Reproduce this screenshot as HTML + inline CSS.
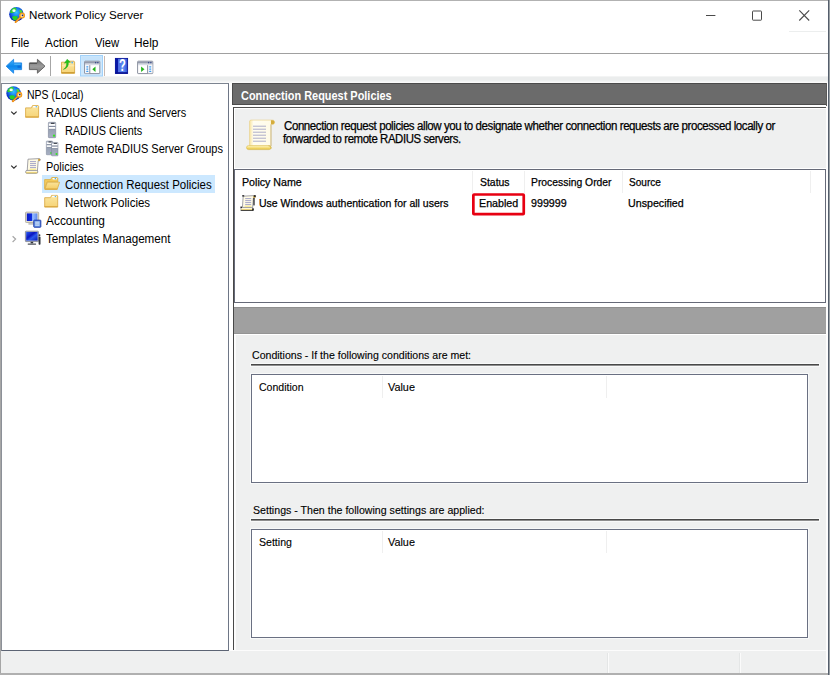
<!DOCTYPE html>
<html lang="en"><head><meta charset="utf-8"><title>Network Policy Server</title>
<style>
html,body{margin:0;padding:0;background:#fff;}
body{width:830px;height:675px;overflow:hidden;font-family:"Liberation Sans",sans-serif;}
#win{position:relative;width:830px;height:675px;overflow:hidden;background:#fff;}
#win div,#win span,#win svg{position:absolute;box-sizing:border-box;}
.t{white-space:nowrap;transform-origin:0 0;line-height:16px;height:16px;color:#000;}
#win .g{left:0;top:0;width:0;height:0;}
</style></head>
<body>
<div id="win">
<div class="g" id="frame" aria-label="Window frame">
<div style="left:0;top:0;width:830px;height:1px;background:#b2b2b2"></div>
<div style="left:0;top:0;width:1px;height:675px;background:#a6a6a6"></div>
<div style="left:0;top:673px;width:830px;height:2px;background:#b0b0b0"></div>
<div style="left:828px;top:0;width:1px;height:675px;background:#545e6c"></div>
<div style="left:829px;top:0;width:1px;height:675px;background:#9aa0a4"></div>
</div>
<div class="g" id="titlebar" aria-label="Title bar">
<span class="t" style="left:28.91px;top:7.00px;font-size:11.7px;transform:scaleX(0.9947);">Network Policy Server</span>
</div>
<div class="g" id="menubar" aria-label="Menu bar">
<span class="t" style="left:11.06px;top:35.00px;font-size:12px;transform:scaleX(0.9444);">File</span>
<span class="t" style="left:45.30px;top:35.00px;font-size:12px;transform:scaleX(0.9848);">Action</span>
<span class="t" style="left:94.50px;top:35.00px;font-size:12px;transform:scaleX(0.9385);">View</span>
<span class="t" style="left:134.01px;top:35.00px;font-size:12px;transform:scaleX(0.9913);">Help</span>
<div style="left:1px;top:53px;width:827px;height:1px;background:#a0a0a0"></div>
</div>
<div class="g" id="toolbar" aria-label="Toolbar">
<div style="left:1px;top:76px;width:827px;height:7px;background:linear-gradient(to bottom,#f3f4f4 0,#f3f4f4 1px,#ebeded 1px,#ebeded 4px,#eef0f0 4px,#eef0f0 5px,#f4f5f5 5px,#f4f5f5 6px,#fafafa 6px)"></div>
</div>
<div class="g" id="statusbar" aria-label="Status bar">
<div style="left:1px;top:651px;width:827px;height:22px;background:#eff0f0"></div>
<div style="left:608px;top:653px;width:1px;height:20px;background:#fbfbfb"></div>
<div style="left:740px;top:653px;width:1px;height:20px;background:#fbfbfb"></div>
<div style="left:826px;top:653px;width:1px;height:20px;background:#fbfbfb"></div>
<div style="left:1px;top:650px;width:827px;height:1px;background:#fcfcfc"></div>
<div style="left:607px;top:653px;width:1px;height:20px;background:#e4e6e6"></div>
<div style="left:739px;top:653px;width:1px;height:20px;background:#e4e6e6"></div>
</div>
<div class="g" id="tree" aria-label="Console tree">
<div style="left:1px;top:83px;width:228px;height:568px;background:#fff;border:1px solid #6e7686;border-top-color:#7c8490;border-left-color:#8c9098;border-bottom-color:#5c6474"></div>
<div style="left:42px;top:175px;width:173px;height:18px;background:#cce8ff"></div>
<span class="t" style="left:27.43px;top:87.00px;font-size:12px;transform:scaleX(0.8746);">NPS (Local)</span>
<span class="t" style="left:46.09px;top:105.00px;font-size:12px;transform:scaleX(0.9138);">RADIUS Clients and Servers</span>
<span class="t" style="left:65.10px;top:123.00px;font-size:12px;transform:scaleX(0.9048);">RADIUS Clients</span>
<span class="t" style="left:65.08px;top:141.00px;font-size:12px;transform:scaleX(0.9181);">Remote RADIUS Server Groups</span>
<span class="t" style="left:46.09px;top:159.00px;font-size:12px;transform:scaleX(0.9100);">Policies</span>
<span class="t" style="left:65.14px;top:177.00px;font-size:12px;transform:scaleX(0.9559);">Connection Request Policies</span>
<span class="t" style="left:65.04px;top:195.00px;font-size:12px;transform:scaleX(0.9598);">Network Policies</span>
<span class="t" style="left:45.80px;top:213.00px;font-size:12px;transform:scaleX(0.9915);">Accounting</span>
<span class="t" style="left:45.80px;top:231.00px;font-size:12px;transform:scaleX(0.9727);">Templates Management</span>
</div>
<div class="g" id="details" aria-label="Details pane">
<div style="left:233px;top:83px;width:594px;height:567px;background:#eff0f0"></div>
<div style="left:232px;top:83px;width:595px;height:22px;background:#6b6b6b;border:1px solid #4c4c4c"></div>
<div style="left:233px;top:105px;width:594px;height:2px;background:#fff"></div>
<div style="left:233px;top:107px;width:594px;height:543px;border-top:1px solid #505050;border-left:1px solid #484848"></div>
<div style="left:234px;top:108px;width:593px;height:60px;border-top:1px solid #fff;border-left:1px solid #fff"></div>
<div style="left:234px;top:168px;width:593px;height:1px;background:#fff"></div>
<span class="t" style="left:241.06px;top:88.00px;font-size:13px;transform:scaleX(0.8410);font-weight:700;color:#fff;">Connection Request Policies</span>
<span class="t" style="left:284.30px;top:118.00px;font-size:12.5px;transform:scaleX(0.9208);letter-spacing:-0.45px;-webkit-text-stroke:0.25px currentColor;">Connection request policies allow you to designate whether connection requests are processed locally or</span>
<span class="t" style="left:283.40px;top:131.00px;font-size:12.5px;transform:scaleX(0.9129);letter-spacing:-0.45px;-webkit-text-stroke:0.25px currentColor;">forwarded to remote RADIUS servers.</span>
<div class="g" id="policy-list" aria-label="Policy list">
<div style="left:234px;top:169px;width:592px;height:134px;background:#fff;border:1px solid #666a78"></div>
<div style="left:472px;top:171px;width:1px;height:22px;background:#efefef"></div>
<div style="left:524px;top:171px;width:1px;height:22px;background:#efefef"></div>
<div style="left:622px;top:171px;width:1px;height:22px;background:#efefef"></div>
<div style="left:810px;top:171px;width:1px;height:22px;background:#efefef"></div>
<div style="left:234px;top:303px;width:593px;height:4px;background:#fff"></div>
<div style="left:234px;top:307px;width:593px;height:27px;background:#a0a0a0;border-top:1px solid #8e8e8e;border-bottom:1px solid #949494"></div>
<div style="left:234px;top:334px;width:593px;height:1px;background:#fff"></div>
<div style="left:234px;top:335px;width:2px;height:315px;background:#fbfbfb"></div>
<div style="left:826px;top:83px;width:2px;height:590px;background:#fdfdfd"></div>
<div style="left:826px;top:83px;width:1px;height:23px;background:#5a5a5a"></div>
<span class="t" style="left:241.73px;top:174.00px;font-size:11px;transform:scaleX(0.9683);-webkit-text-stroke:0.25px currentColor;">Policy Name</span>
<span class="t" style="left:479.80px;top:174.00px;font-size:11px;transform:scaleX(0.9484);-webkit-text-stroke:0.25px currentColor;">Status</span>
<span class="t" style="left:530.66px;top:174.00px;font-size:11px;transform:scaleX(0.9412);-webkit-text-stroke:0.25px currentColor;">Processing Order</span>
<span class="t" style="left:628.90px;top:174.00px;font-size:11px;transform:scaleX(0.9143);-webkit-text-stroke:0.25px currentColor;">Source</span>
<span class="t" style="left:258.55px;top:195.00px;font-size:11px;transform:scaleX(0.9535);-webkit-text-stroke:0.25px currentColor;">Use Windows authentication for all users</span>
<span class="t" style="left:478.83px;top:195.00px;font-size:11px;transform:scaleX(0.9718);-webkit-text-stroke:0.25px currentColor;">Enabled</span>
<span class="t" style="left:531.20px;top:195.00px;font-size:11px;transform:scaleX(0.9722);-webkit-text-stroke:0.25px currentColor;">999999</span>
<span class="t" style="left:627.93px;top:195.00px;font-size:11px;transform:scaleX(0.9696);-webkit-text-stroke:0.25px currentColor;">Unspecified</span>
</div>
<div class="g" id="conditions" aria-label="Conditions">
<div style="left:251px;top:364px;width:568px;height:2px;background:linear-gradient(to bottom,#484848 0,#484848 1px,#8e8e8e 1px);box-shadow:0 0 0 1px #f8f9f9"></div>
<div style="left:251px;top:374px;width:557px;height:109px;background:#fff;border:1px solid #6a7082;box-shadow:0 0 0 1px #f8f9f9"></div>
<div style="left:382px;top:376px;width:1px;height:22px;background:#efefef"></div>
<div style="left:606px;top:376px;width:1px;height:22px;background:#efefef"></div>
<span class="t" style="left:252.38px;top:347.00px;font-size:11.5px;transform:scaleX(0.9186);-webkit-text-stroke:0.12px currentColor;">Conditions - If the following conditions are met:</span>
<span class="t" style="left:259.44px;top:379.00px;font-size:11px;transform:scaleX(0.9578);-webkit-text-stroke:0.12px currentColor;">Condition</span>
<span class="t" style="left:388.00px;top:379.00px;font-size:11px;transform:scaleX(0.9852);-webkit-text-stroke:0.12px currentColor;">Value</span>
</div>
<div class="g" id="settings" aria-label="Settings">
<div style="left:251px;top:519px;width:568px;height:2px;background:linear-gradient(to bottom,#484848 0,#484848 1px,#8e8e8e 1px);box-shadow:0 0 0 1px #f8f9f9"></div>
<div style="left:251px;top:529px;width:557px;height:109px;background:#fff;border:1px solid #6a7082;box-shadow:0 0 0 1px #f8f9f9"></div>
<div style="left:382px;top:531px;width:1px;height:22px;background:#efefef"></div>
<div style="left:606px;top:531px;width:1px;height:22px;background:#efefef"></div>
<span class="t" style="left:253.08px;top:502.00px;font-size:11.5px;transform:scaleX(0.9225);-webkit-text-stroke:0.12px currentColor;">Settings - Then the following settings are applied:</span>
<span class="t" style="left:259.44px;top:534.00px;font-size:11px;transform:scaleX(0.9606);-webkit-text-stroke:0.12px currentColor;">Setting</span>
<span class="t" style="left:388.00px;top:534.00px;font-size:11px;transform:scaleX(0.9852);-webkit-text-stroke:0.12px currentColor;">Value</span>
</div>
</div>
<svg width="830" height="675" viewBox="0 0 830 675" style="left:0;top:0">
<defs>
  <radialGradient id="gGlobe" cx="0.5" cy="0.38" r="0.62">
    <stop offset="0" stop-color="#35c4ff"/><stop offset="0.45" stop-color="#1a7cf0"/><stop offset="1" stop-color="#0414b4"/>
  </radialGradient>
  <linearGradient id="gArrL" x1="0" y1="0" x2="0" y2="1">
    <stop offset="0" stop-color="#3fb2ff"/><stop offset="0.5" stop-color="#0d86ea"/><stop offset="1" stop-color="#2da2ff"/>
  </linearGradient>
  <linearGradient id="gArrR" x1="0" y1="0" x2="0" y2="1">
    <stop offset="0" stop-color="#6e6e6e"/><stop offset="0.5" stop-color="#9c9c9c"/><stop offset="1" stop-color="#7c7c7c"/>
  </linearGradient>
  <linearGradient id="gFold" x1="0" y1="0" x2="0" y2="1">
    <stop offset="0" stop-color="#fbe6a2"/><stop offset="1" stop-color="#f6d477"/>
  </linearGradient>
  <linearGradient id="gFoldO" x1="0" y1="0" x2="0" y2="1">
    <stop offset="0" stop-color="#fbe39a"/><stop offset="1" stop-color="#f3cc62"/>
  </linearGradient>
  <linearGradient id="gHelp" x1="0" y1="0" x2="1" y2="0">
    <stop offset="0" stop-color="#0a1aa8"/><stop offset="0.25" stop-color="#4f6fe4"/><stop offset="0.7" stop-color="#5b8af2"/><stop offset="1" stop-color="#2a48d0"/>
  </linearGradient>
  <linearGradient id="gSrv" x1="0" y1="0" x2="0" y2="1">
    <stop offset="0" stop-color="#c4cad6"/><stop offset="0.5" stop-color="#98a2b4"/><stop offset="1" stop-color="#a8b0c4"/>
  </linearGradient>
  <linearGradient id="gScr" x1="0" y1="0" x2="1" y2="0">
    <stop offset="0" stop-color="#f9e6a4"/><stop offset="0.16" stop-color="#fffdf2"/><stop offset="0.8" stop-color="#fffbe8"/><stop offset="1" stop-color="#f2dc98"/>
  </linearGradient>
  <linearGradient id="gRoll" x1="0" y1="0" x2="0" y2="1">
    <stop offset="0" stop-color="#fff6c8"/><stop offset="0.6" stop-color="#f4da6c"/><stop offset="1" stop-color="#dcb840"/>
  </linearGradient>
  <linearGradient id="gMon" x1="0" y1="0" x2="1" y2="0">
    <stop offset="0" stop-color="#0a18c8"/><stop offset="0.45" stop-color="#1030e0"/><stop offset="0.55" stop-color="#9cc0ff"/><stop offset="1" stop-color="#5a86f0"/>
  </linearGradient>
  <linearGradient id="gMon2" x1="0" y1="0" x2="1" y2="1">
    <stop offset="0" stop-color="#2a5cf0"/><stop offset="0.4" stop-color="#0a14c0"/><stop offset="0.6" stop-color="#2a58ec"/><stop offset="1" stop-color="#0818b8"/>
  </linearGradient>

  <g id="globe">
    <circle cx="7.4" cy="7.2" r="7.25" fill="url(#gGlobe)"/>
    <path d="M1 5.4 C1.4 3 3.4 1 6 0.6 C7.4 0.9 7.8 2.4 7 3.8 C6 5.4 4.2 6 2.6 6 C1.8 6 1.2 5.8 1 5.4Z" fill="#2fd22c"/>
    <ellipse cx="5" cy="3.7" rx="1.7" ry="1.35" fill="#fff" opacity="0.95"/>
    <path d="M10.4 3 C11.6 2.2 13.2 3.4 13.5 5.2 C12.8 6 11.2 6 10.5 5 Z" fill="#4fdc2e"/>
    <path d="M3 10.2 C4.2 8.6 7.4 8.6 8.8 9.8 C9 11.6 7.6 13.2 5.8 13.6 C4.2 13 3.2 11.6 3 10.2Z" fill="#25d02a"/>
    <path d="M11.6 10.2 L6.6 15" stroke="#ec8206" stroke-width="1.9" stroke-linecap="round" fill="none"/>
    <path d="M11.4 10.4 L6.9 14.7" stroke="#ffc23c" stroke-width="0.7" stroke-linecap="round" fill="none"/>
    <circle cx="13.1" cy="8.5" r="2.25" fill="#fff0b8" stroke="#ee8808" stroke-width="1.4"/>
    <circle cx="13.1" cy="8.5" r="2.1" fill="none" stroke="#ffcc4c" stroke-width="0.5"/>
    <circle cx="13.5" cy="8.3" r="0.85" fill="#141c8c"/>
  </g>

  <g id="folder">
    <path d="M0.5 2.9 L6.3 2.9 L7.4 0.6 L13.1 0.6 L13.5 1.2 L13.5 12.3 L0.5 12.3 Z" fill="url(#gFold)" stroke="#dcae4c" stroke-width="0.9"/>
    <rect x="7.8" y="1" width="4.8" height="1.4" rx="0.7" fill="#fff"/>
    <circle cx="11.2" cy="1.7" r="0.8" fill="#58b4f4"/>
    <rect x="0.5" y="11.4" width="13" height="0.9" fill="#d9a53c"/>
  </g>

  <g id="server">
    <rect x="0.3" y="0.3" width="7.3" height="15.4" rx="0.7" fill="url(#gSrv)" stroke="#788296" stroke-width="0.6"/>
    <rect x="0.8" y="1.8" width="6.3" height="2.1" fill="#fff"/>
    <rect x="0.8" y="4.9" width="6.3" height="2" fill="#fff"/>
    <rect x="0.8" y="3.9" width="6.3" height="1" fill="#7e8698"/>
    <rect x="0.8" y="6.9" width="6.3" height="0.9" fill="#8a92a4"/>
    <rect x="2.8" y="0.8" width="3.6" height="1" fill="#22262e"/>
    <circle cx="5.9" cy="13.7" r="1.15" fill="#34e420"/>
  </g>

  <g id="scroll16">
    <path d="M3 1.2 L14.2 0.6 C15.6 0.6 15.8 2.6 14.4 2.8 L13.2 2.8 L12.4 13 L2.2 13 Z" fill="#fffbe6" stroke="#8c8c94" stroke-width="0.8"/>
    <path d="M13.2 0.9 C15.4 0.4 16 2.6 14.2 3 L13.2 2.8Z" fill="#c89a34"/>
    <rect x="0.6" y="12.4" width="12.2" height="3" rx="1.5" fill="#fff8d8" stroke="#8c8c94" stroke-width="0.8"/>
    <rect x="0.9" y="14.3" width="11.4" height="1" rx="0.5" fill="#e4c860"/>
    <g stroke="#9a9ac4" stroke-width="0.9">
      <line x1="5" y1="3.6" x2="11" y2="3.6"/><line x1="5" y1="5.6" x2="11" y2="5.6"/><line x1="5" y1="7.6" x2="11" y2="7.6"/><line x1="5" y1="9.6" x2="11" y2="9.6"/>
    </g>
    <rect x="4.6" y="10.6" width="6.6" height="1.4" fill="#f9ec9c"/>
  </g>

  <g id="winL">
    <rect x="0.4" y="0.4" width="15.2" height="12.4" rx="0.6" fill="#fff" stroke="#7e8494" stroke-width="0.9"/>
    <rect x="0.8" y="0.8" width="14.4" height="2" fill="#959cae"/>
    <rect x="0.8" y="3" width="14.4" height="1.4" fill="#d8dce6"/>
    <rect x="10.8" y="1.1" width="1.2" height="1.4" fill="#3c4c8c"/><rect x="13" y="1.1" width="1.2" height="1.4" fill="#3c4c8c"/>
  </g>
</defs>

<!-- highlight box -->
<rect x="473.35" y="194.5" width="50.4" height="19.6" rx="0.7" fill="none" stroke="#e70012" stroke-width="2.7"/>
<!-- title icon -->
<use href="#globe" x="9" y="7"/>
<!-- window controls -->
<g stroke="#4a4a4a" stroke-width="1" fill="none">
  <line x1="706" y1="15.5" x2="715.4" y2="15.5"/>
  <rect x="752.5" y="11" width="9" height="9.2" rx="0.6"/>
  <path d="M799.3 10.3 L809.2 20.5 M809.2 10.3 L799.3 20.5" stroke-width="1.1"/>
</g>
<line x1="789" y1="31.5" x2="826" y2="31.5" stroke="#eceeee" stroke-width="1"/>

<!-- toolbar -->
<path d="M6.2 66.2 L13.6 59.3 L13.6 62.9 L21.6 62.9 L21.6 69.6 L13.6 69.6 L13.6 73.2 Z" fill="url(#gArrL)" stroke="#1d84e4" stroke-width="0.9" stroke-linejoin="round"/>
<path d="M14.2 64.2 L20.6 64.2" stroke="#7ad0ff" stroke-width="0.9" opacity="0.8"/>
<rect x="17.5" y="65.6" width="3.4" height="2.2" fill="#0a62d2" opacity="0.75"/>
<path d="M45 66.2 L37.4 59.3 L37.4 62.9 L29.4 62.9 L29.4 69.6 L37.4 69.6 L37.4 73.2 Z" fill="url(#gArrR)" stroke="#5e5e5e" stroke-width="0.9" stroke-linejoin="round"/>
<path d="M30 63.3 L37 63.3" stroke="#3c3c3c" stroke-width="0.9" opacity="0.8"/>
<line x1="50.5" y1="56" x2="50.5" y2="76" stroke="#a6a6a6" stroke-width="1"/>

<!-- folder up -->
<g transform="translate(61,60.6)">
  <path d="M0.5 1.6 L5.6 1.6 L6.6 0.6 L13 0.6 L13.6 1.4 L13.6 12.6 L0.5 12.6 Z" fill="url(#gFold)" stroke="#d9aa45" stroke-width="0.9"/>
  <rect x="0.6" y="11.4" width="13" height="1.5" fill="#cf9f36"/>
  <rect x="0.9" y="4.8" width="12.4" height="0.8" fill="#fff1c0" opacity="0.9"/>
  <circle cx="11.2" cy="1.9" r="0.9" fill="#5ab0f0"/>
  <path d="M2.4 8.8 C5.2 7.4 5.6 5 5.6 2.2 L3.4 2.6 L6.2 -1.4 L9.4 1.6 L7.4 1.9 C7.6 5.6 6 7.8 2.4 8.8 Z" fill="#22c41a" stroke="#18a012" stroke-width="0.4"/>
</g>

<!-- selected toolbar button -->
<rect x="80.5" y="55.5" width="22" height="20.5" fill="#cfe8fc" stroke="#a2d2fa" stroke-width="1"/>
<rect x="81.5" y="56.5" width="20" height="4" fill="#c6e3fb"/>
<g transform="translate(84.2,60.8)">
  <use href="#winL"/>
  <rect x="0.9" y="4.4" width="4.4" height="8" fill="#f4f6fa"/>
  <line x1="5.6" y1="4.4" x2="5.6" y2="12.4" stroke="#7e8494" stroke-width="0.9"/>
  <g fill="#3c9cf0"><rect x="2" y="5.4" width="2.2" height="1.2" rx="0.6"/><rect x="2" y="7.7" width="2.2" height="1.2" rx="0.6"/><rect x="2" y="10" width="2.2" height="1.2" rx="0.6"/></g>
  <path d="M8.1 8.4 L11.3 5.6 L11.3 11.2 Z" fill="#22b41a"/>
</g>
<line x1="104.5" y1="56" x2="104.5" y2="76" stroke="#c8bab4" stroke-width="1"/>

<!-- help -->
<g transform="translate(115,58)">
  <rect x="0.4" y="0.4" width="12.2" height="15" fill="url(#gHelp)" stroke="#0a1498" stroke-width="0.9"/>
  <rect x="0.4" y="0.4" width="2.6" height="15" fill="#0818a4"/>
  <rect x="0.4" y="14.2" width="12.2" height="1.4" fill="#081090"/>
  <text transform="translate(7.5,13.3) scale(0.68,1)" x="0" y="0" font-family="Liberation Sans, sans-serif" font-weight="700" font-size="16.4" fill="#fff" text-anchor="middle">?</text>
</g>

<!-- window right icon -->
<g transform="translate(137.2,60.8)">
  <use href="#winL"/>
  <rect x="10.8" y="4.4" width="4.4" height="8" fill="#f4f6fa"/>
  <line x1="10.4" y1="4.4" x2="10.4" y2="12.4" stroke="#7e8494" stroke-width="0.9"/>
  <g fill="#3c9cf0"><rect x="11.9" y="5.4" width="2.2" height="1.2" rx="0.6"/><rect x="11.9" y="7.7" width="2.2" height="1.2" rx="0.6"/><rect x="11.9" y="10" width="2.2" height="1.2" rx="0.6"/></g>
  <path d="M7.3 8.4 L3.9 5.6 L3.9 11.2 Z" fill="#22b41a"/>
</g>

<!-- tree icons -->
<use href="#globe" x="6.2" y="86.2"/>
<path d="M11.2 111.6 L13.9 114.2 L16.6 111.6" stroke="#2c2c2c" stroke-width="1.2" fill="none"/>
<use href="#folder" x="25.1" y="105"/>
<use href="#server" x="48.1" y="122"/>
<g transform="translate(46.1,140.8) scale(0.86,0.89)"><use href="#server"/></g>
<g transform="translate(51.3,142.2) scale(0.88,0.87)"><use href="#server"/></g>
<path d="M11.2 165.6 L13.9 168.2 L16.6 165.6" stroke="#2c2c2c" stroke-width="1.2" fill="none"/>
<use href="#scroll16" x="25" y="158"/>
<!-- open folder -->
<g transform="translate(44,177)">
  <path d="M0.6 2.6 L6.6 2.6 L7.8 0.5 L13.2 0.5 L13.8 1.4 L13.8 5 L3 5 L0.6 11.6 Z" fill="#f3cb5c" stroke="#dcae44" stroke-width="0.8"/>
  <rect x="8.4" y="0.9" width="4.6" height="1.5" rx="0.7" fill="#fff"/>
  <circle cx="11.4" cy="1.6" r="0.8" fill="#4aaef4"/>
  <path d="M3.4 5.2 L15.6 5.2 L13.2 12.4 L0.8 12.4 Z" fill="url(#gFoldO)" stroke="#dcae48" stroke-width="0.8"/>
  <path d="M1 11.6 L13.4 11.6 L13.2 12.5 L0.8 12.5Z" fill="#d9a53c"/>
</g>
<use href="#folder" x="44.2" y="194.8"/>

<!-- accounting -->
<g transform="translate(25,211.6)">
  <rect x="0.5" y="0.5" width="13.2" height="10.4" rx="0.8" fill="#e4e0d0" stroke="#a8a498" stroke-width="0.8"/>
  <rect x="1.8" y="1.8" width="10.6" height="7.6" fill="url(#gMon)"/>
  <rect x="3.4" y="11.6" width="6" height="1.4" fill="#b4b4b4"/>
  <rect x="8.8" y="8.6" width="7" height="7" rx="0.5" fill="#6c9ae8" stroke="#1a38a8" stroke-width="1"/>
  <rect x="10.2" y="10" width="4.2" height="4.2" fill="#c8dcf8"/>
  <line x1="10.2" y1="11.4" x2="14.4" y2="11.4" stroke="#7aa0e0" stroke-width="0.5"/><line x1="10.2" y1="12.8" x2="14.4" y2="12.8" stroke="#7aa0e0" stroke-width="0.5"/>
</g>
<!-- templates -->
<path d="M12.6 236.2 L15.6 239.1 L12.6 242" stroke="#a6a6a6" stroke-width="1.2" fill="none"/>
<g transform="translate(25,231)">
  <rect x="0.4" y="0.2" width="13" height="10.4" rx="0.6" fill="#c4c8d4" stroke="#6a7080" stroke-width="0.7"/>
  <rect x="1.2" y="1" width="11.4" height="8.6" fill="url(#gMon2)"/>
  <rect x="5.6" y="10.8" width="2.6" height="1.6" fill="#30343c"/>
  <rect x="2.6" y="12.4" width="8.6" height="1.3" rx="0.6" fill="#4c5058"/>
  <rect x="13.6" y="5.4" width="1.9" height="8.3" rx="0.7" fill="#30343c"/>
  <circle cx="14.5" cy="4.2" r="0.9" fill="#30343c"/>
</g>

<!-- big scroll in description -->
<g transform="translate(246,119.6)">
  <path d="M3.6 1.4 C3.8 0.8 4.4 0.5 5 0.5 L26.6 0.5 C29 0.5 29.4 4.6 26.8 4.8 L25 4.8 L25 26.4 L3.6 26.4 Z" fill="url(#gScr)" stroke="#e6cc80" stroke-width="0.6"/>
  <path d="M25 0.7 L26.6 0.7 C29 0.7 29.2 4.4 26.8 4.6 L25 4.6 Z" fill="#d4ac3c"/>
  <path d="M25 4.8 L25 26.4" stroke="#c4b48c" stroke-width="0.8"/>
  <rect x="0.5" y="26" width="24.6" height="4" rx="2" fill="url(#gRoll)" stroke="#d6b43c" stroke-width="0.5"/>
  <path d="M22.6 26.2 C24.6 26.4 25.2 27.6 25 29" stroke="#c8a838" stroke-width="0.7" fill="none"/>
  <g stroke="#adadc8" stroke-width="1">
    <line x1="7" y1="6.6" x2="20" y2="6.6"/><line x1="7" y1="9.6" x2="20" y2="9.6"/><line x1="7" y1="12.6" x2="20" y2="12.6"/><line x1="7" y1="15.6" x2="20" y2="15.6"/><line x1="7" y1="18.6" x2="20" y2="18.6"/><line x1="7" y1="21.6" x2="20" y2="21.6"/>
  </g>
</g>

<!-- list row icon -->
<g transform="translate(240.2,195)">
  <use href="#scroll16"/>
  <rect x="2" y="0.2" width="2" height="1.3" fill="#1c1c1c"/>
  <rect x="13.6" y="0.2" width="2" height="1.6" fill="#1c1c1c"/>
  <rect x="13.2" y="3" width="1.2" height="7.4" fill="#1c1c1c"/>
  <rect x="0.2" y="11.6" width="1.6" height="1.3" fill="#1c1c1c"/>
  <rect x="0.4" y="15" width="12.6" height="0.8" fill="#2c2c2c"/>
  <rect x="12" y="13.4" width="1.6" height="2.2" fill="#1c1c1c"/>
</g>
</svg>
</div>
</body></html>
